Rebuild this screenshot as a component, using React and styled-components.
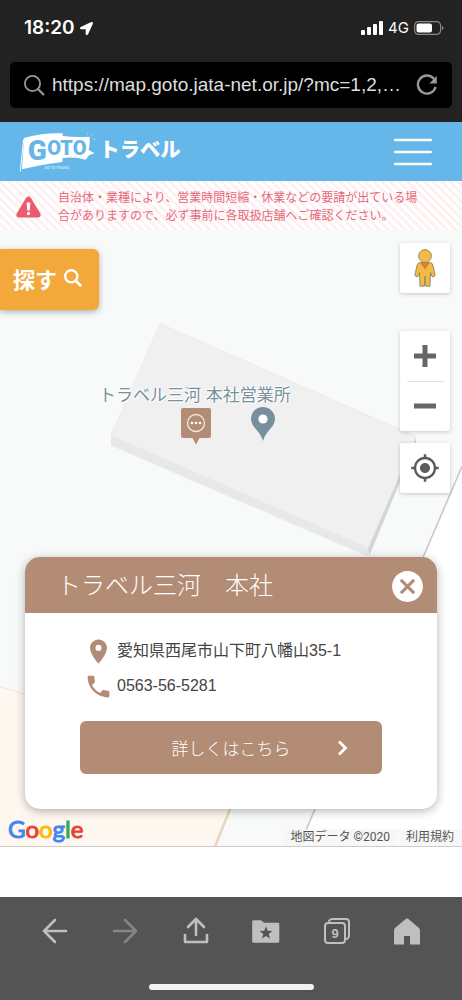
import React from "react";
import styled, { createGlobalStyle } from "styled-components";
import { MdCancel, MdMyLocation, MdPhone, MdPlace } from "react-icons/md";
import { FaLocationArrow } from "react-icons/fa";

const brown = "#b38c75";

const GlobalStyle = createGlobalStyle`
  * {
    box-sizing: border-box;
  }
  body {
    margin: 0;
    background: #fff;
    color: #444;
    font-family: "Liberation Sans", "Noto Sans CJK JP", sans-serif;
  }
  svg {
    display: block;
    flex: none;
  }
  button {
    font-family: inherit;
  }
`;

const Page = styled.div`
  display: flex;
  flex-direction: column;
  min-height: 100vh;
`;

const BrowserTop = styled.div`
  display: flex;
  flex-direction: column;
  gap: 12px;
  padding: 6px 10px 14px;
  background: #222;
`;

const StatusBar = styled.div`
  display: flex;
  align-items: center;
  justify-content: space-between;
  height: 44px;
  padding: 0 8px 0 14px;
  color: #fff;
`;

const StatusGroup = styled.div`
  display: flex;
  align-items: center;
  gap: 5px;
`;

const Time = styled.span`
  font: 600 19px/24px Inter, sans-serif;
`;

const Network = styled.span`
  font: 400 15px/24px Inter, sans-serif;
`;

const AddressBar = styled.form`
  display: flex;
  align-items: center;
  gap: 7px;
  height: 46px;
  padding: 0 13px 0 14px;
  border-radius: 5px;
  background: #000;
  color: #999;
`;

const AddressInput = styled.input`
  flex: 1;
  min-width: 0;
  padding: 0;
  border: 0;
  outline: 0;
  background: transparent;
  color: #ddd;
  font-family: inherit;
  font-size: 19px;
  text-overflow: ellipsis;
`;

const IconButton = styled.button`
  display: flex;
  align-items: center;
  justify-content: center;
  width: ${(props) => props.$size}px;
  height: ${(props) => props.$size}px;
  padding: 0;
  border: 0;
  background: transparent;
  color: inherit;
  cursor: pointer;
`;

const SiteHeader = styled.header`
  display: flex;
  align-items: center;
  justify-content: space-between;
  height: 59px;
  padding: 0 30px 0 20px;
  background: #65b6e9;
  color: #fff;
`;

const LogoLink = styled.a`
  color: #fff;
`;

const Notice = styled.div`
  display: flex;
  align-items: center;
  gap: 17px;
  padding: 8px 35px 5px 16px;
  background: repeating-linear-gradient(
    45deg,
    #fff 0,
    #fff 3px,
    #fdf1f2 3px,
    #fdf1f2 6px
  );
`;

const NoticeText = styled.p`
  margin: 0;
  color: #e6697a;
  font-size: 12px;
  line-height: 18px;
`;

const MapArea = styled.main`
  position: relative;
  flex: 1;
  min-height: 600px;
  margin-bottom: 50px;
  border-bottom: 1px solid #ccc;
  background: #f8faf9;
  overflow: hidden;
`;

const MapDrawing = styled.svg`
  position: absolute;
  inset: 0;
  width: 100%;
  height: 100%;
`;

const MapLabel = styled.span`
  position: absolute;
  top: 153px;
  left: 99px;
  color: #78909c;
  font-size: 17px;
  line-height: 26px;
  text-shadow: 0 0 2px #fff, 0 0 2px #fff, 1px 1px 1px #fff, -1px -1px 1px #fff;
  white-space: nowrap;
`;

const Pin = styled.div`
  position: absolute;
  top: ${(props) => props.$top}px;
  left: ${(props) => props.$left}px;
`;

const SearchButton = styled.button`
  position: absolute;
  top: 19px;
  left: 0;
  display: flex;
  align-items: center;
  gap: 7px;
  height: 61px;
  padding: 0 17px 3px 13px;
  border: 0;
  border-radius: 0 6px 6px 0;
  background: #f2a83b;
  box-shadow: 0 2px 6px rgba(0, 0, 0, 0.3);
  color: #fff;
  font-size: 22px;
  font-weight: 700;
`;

const Controls = styled.div`
  position: absolute;
  top: 13px;
  right: 12px;
  display: flex;
  flex-direction: column;
  gap: 12px;
`;

const ControlPanel = styled.div`
  display: flex;
  flex-direction: column;
  align-items: center;
  margin-bottom: ${(props) => (props.$spaced ? 26 : 0)}px;
  border-radius: 2px;
  background: #fff;
  box-shadow: 0 1px 4px rgba(0, 0, 0, 0.2);
  color: #5c5c5c;
`;

const Divider = styled.div`
  width: 37px;
  height: 1px;
  margin-bottom: -1px;
  background: #e0e0e0;
`;

const Card = styled.section`
  position: absolute;
  right: 25px;
  bottom: 37px;
  left: 25px;
  border-radius: 15px;
  background: #fff;
  box-shadow: 0 2px 10px rgba(0, 0, 0, 0.3);
  overflow: hidden;
`;

const CardHeader = styled.div`
  display: flex;
  align-items: center;
  justify-content: space-between;
  height: 56px;
  padding: 2px 11px 0 32px;
  background: ${brown};
  color: #fff;
`;

const CardTitle = styled.h2`
  margin: 0;
  font-size: 24px;
  font-weight: 300;
  line-height: 36px;
`;

const CardBody = styled.div`
  display: flex;
  flex-direction: column;
  gap: 20px;
  padding: 23px 55px 35px;
`;

const Details = styled.ul`
  display: flex;
  flex-direction: column;
  gap: 5px;
  margin: 0;
  padding: 0 0 0 4px;
  list-style: none;
`;

const Detail = styled.li`
  display: flex;
  align-items: center;
  gap: 4px;
  color: ${brown};
  font-size: 16px;
  line-height: 30px;
`;

const DetailText = styled.span`
  color: #444;
`;

const DetailLink = styled.a`
  color: #444;
  text-decoration: none;
`;

const MoreLink = styled.a`
  display: grid;
  grid-template-columns: 1fr auto 1fr;
  align-items: center;
  height: 53px;
  padding: 0 34px;
  border-radius: 6px;
  background: ${brown};
  color: #fff;
  font-size: 17px;
  font-weight: 300;
  text-decoration: none;

  span {
    grid-column: 2;
  }
  svg {
    justify-self: end;
  }
`;

const GoogleLogo = styled.a`
  position: absolute;
  bottom: 1px;
  left: 8px;
  font: 400 24px/32px Lato, sans-serif;
  text-decoration: none;
  -webkit-text-stroke-width: 1px;
`;

const Letter = styled.span`
  color: ${(props) => props.$color};
`;

const Attribution = styled.div`
  position: absolute;
  right: 0;
  bottom: 0;
  display: flex;
  gap: 1px;
  color: #555;
  font: 400 12px/17px Roboto, "Noto Sans CJK JP", sans-serif;

  span,
  a {
    padding: 0 8px 0 7px;
    background: rgba(245, 245, 245, 0.8);
    color: inherit;
    text-decoration: none;
  }
`;

const BrowserBottom = styled.footer`
  display: flex;
  flex-direction: column;
  align-items: center;
  justify-content: space-between;
  height: 103px;
  padding: 19px 40px 10px;
  background: #545454;
  color: #bfbfbf;
`;

const Toolbar = styled.nav`
  display: flex;
  align-self: stretch;
  justify-content: space-between;
`;

const HomeIndicator = styled.div`
  width: 165px;
  height: 6px;
  border-radius: 3px;
  background: #f2f2f2;
`;

const googleLetters = [
  ["G", "#4285f4"],
  ["o", "#ea4335"],
  ["o", "#fbbc05"],
  ["g", "#4285f4"],
  ["l", "#34a853"],
  ["e", "#ea4335"],
];

const SignalIcon = () => (
  <svg width="22" height="14" viewBox="0 0 22 14" fill="currentColor">
    <rect x="0" y="9" width="4" height="5" rx="1" />
    <rect x="6" y="6" width="4" height="8" rx="1" />
    <rect x="12" y="3" width="4" height="11" rx="1" />
    <rect x="18" y="0" width="4" height="14" rx="1" />
  </svg>
);

const BatteryIcon = () => (
  <svg width="30" height="14" viewBox="0 0 30 14" fill="none">
    <rect x=".6" y=".6" width="26" height="12.8" rx="4" stroke="#888" strokeWidth="1.2" />
    <rect x="2.5" y="2.5" width="15.5" height="9" rx="2" fill="#fff" />
    <path d="M28 5c2 .6 2 3.4 0 4z" fill="#888" />
  </svg>
);

const LensIcon = ({ size = 21, weight = 1.8 }) => (
  <svg width={size} height={size} viewBox="0 0 21 21" fill="none" stroke="currentColor" strokeWidth={weight}>
    <circle cx="8.5" cy="8.5" r={8.5 - weight / 2} />
    <path d="M13.500 13.500l6.500 6.500" strokeWidth={weight + 0.4} />
  </svg>
);

const ReloadIcon = () => (
  <svg width="22" height="22" viewBox="0 0 22 22" fill="none">
    <path d="M18 5A9 9 0 1 0 19.600 13" stroke="currentColor" strokeWidth="2.4" />
    <path d="M20.8 2v7.500h-7.500z" fill="currentColor" />
  </svg>
);

const SiteLogo = () => (
  <svg width="170" height="42" viewBox="60 50 510 126" role="img" aria-label="GOTOトラベル">
    <path
      d="M72 71Q128 54 188 57L188 65Q228 70 269 67Q271 86 266 107L284 117L267 123L257 136Q224 126 188 131L187 143Q119 152 66 165Z"
      fill="#fff"
    />
    <path d="M71 75Q66 120 61 171" stroke="#fff" strokeWidth="3" fill="none" />
    <path d="M262 61l2-9M272 66l10-8M276 74l13 1" stroke="#a9d8f5" strokeWidth="2" />
    <g fill="#65b6e9" fontFamily="Roboto, sans-serif" fontWeight="900">
      <text x="83" y="137" fontSize="84">
        G
      </text>
      <text x="142" y="121" fontSize="60">
        OTO
      </text>
    </g>
    <text x="134" y="164" fill="#c4e4f8" fontFamily="Roboto, sans-serif" fontSize="11" fontWeight="700">
      GO TO TRAVEL
    </text>
    <text
      x="298"
      y="129"
      fill="#fff"
      fontFamily="Noto Sans CJK JP, sans-serif"
      fontSize="61"
      fontWeight="900"
      fontStyle="oblique 10deg"
    >
      トラベル
    </text>
  </svg>
);

const MenuIcon = () => (
  <svg width="38" height="28" viewBox="0 0 38 28" stroke="#fff" strokeWidth="2.6" strokeLinecap="round">
    <path d="M1.3 2h35.4M1.3 14h35.4M1.3 26h35.4" />
  </svg>
);

const WarningIcon = () => (
  <svg width="25" height="22" viewBox="0 0 25 22">
    <path
      d="M10 2Q12.500-1.500 15 2L24.300 17.500Q25.500 21.300 22 21.500H3Q-.5 21.300.7 17.500Z"
      fill="#ec5b6d"
    />
    <path d="M10.600 6.500h3.800l-.7 8h-2.400z" fill="#fff" />
    <circle cx="12.5" cy="17.500" r="1.700" fill="#fff" />
  </svg>
);

const PegmanIcon = () => (
  <svg width="22" height="38" viewBox="0 0 22 38">
    <path
      d="M6.200 13.500Q3.500 13.700 3 16.500L.8 26.500Q1.200 28 4 27.500L5.500 23.500L6 37.200H10.300L11 27L11.700 37.200H16L16.500 23.500L18 27.500Q20.800 28 21.200 26.500L19 16.500Q18.500 13.700 15.800 13.500Z"
      fill="#f3bb45"
      stroke="#8b8265"
      strokeWidth=".9"
    />
    <path d="M6 13.500h10l-5 7z" fill="#d6823d" />
    <circle cx="11" cy="7" r="6.400" fill="#f3bb45" stroke="#8b8265" strokeWidth=".9" />
  </svg>
);

const ZoomIcon = ({ plus }) => (
  <svg width="22" height="22" viewBox="0 0 22 22" stroke="#666" strokeWidth="5">
    <path d="M0 11H22" />
    {plus && <path d="M11 0V22" />}
  </svg>
);

const ShopMarker = () => (
  <svg width="30" height="37" viewBox="0 0 30 37">
    <path d="M2 0h26q2 0 2 2v26q0 2-2 2h-9.500L15 36.500 11.500 30H2q-2 0-2-2V2q0-2 2-2z" fill={brown} />
    <circle cx="15" cy="15" r="8.500" fill="none" stroke="#f1e6df" strokeWidth="1.300" />
    <g fill="#fff">
      <circle cx="11" cy="15" r="1.300" />
      <circle cx="15" cy="15" r="1.300" />
      <circle cx="19" cy="15" r="1.300" />
    </g>
  </svg>
);

const PlaceMarker = () => (
  <svg width="24" height="34" viewBox="0 0 24 34">
    <path
      d="M12 0C5.400 0 0 5.200 0 11.700C0 20.500 9 23 12 34C15 23 24 20.500 24 11.700C24 5.200 18.600 0 12 0z"
      fill="#78909c"
    />
    <circle cx="12" cy="12" r="4.600" fill="#fff" />
  </svg>
);

const ChevronIcon = () => (
  <svg width="11" height="16" viewBox="0 0 11 16" fill="none" stroke="#fff" strokeWidth="2.800">
    <path d="M2 1.500L8.500 8L2 14.500" />
  </svg>
);

const ToolIcon = ({ children, color = "currentColor" }) => (
  <svg
    width="30"
    height="30"
    viewBox="0 0 30 30"
    fill="none"
    stroke={color}
    strokeWidth="2.600"
    strokeLinecap="round"
    strokeLinejoin="round"
  >
    {children}
  </svg>
);

const tools = [
  {
    label: "戻る",
    icon: (
      <ToolIcon>
        <path d="M26 15H4M15 4L4 15L15 26" />
      </ToolIcon>
    ),
  },
  {
    label: "進む",
    icon: (
      <ToolIcon color="#868686">
        <path d="M4 15H26M15 4L26 15L15 26" />
      </ToolIcon>
    ),
  },
  {
    label: "共有",
    icon: (
      <ToolIcon>
        <path d="M15 19V3M7 11L15 3L23 11M4 19V26H26V19" />
      </ToolIcon>
    ),
  },
  {
    label: "ブックマーク",
    icon: (
      <ToolIcon>
        <path d="M2.500 5.500H9.500L12.500 8H27V25.500H2.500Z" fill="currentColor" />
        <path
          d="M15 10.200l1.700 4.500 4.700.2-3.700 3 1.300 4.600L15 19.900l-4 2.600 1.300-4.600-3.700-3 4.700-.2z"
          fill="#545454"
          stroke="none"
        />
      </ToolIcon>
    ),
  },
  {
    label: "タブ",
    icon: (
      <ToolIcon>
        <rect x="3" y="7" width="20" height="20" rx="3" strokeWidth="2" />
        <path d="M7 5Q8 3 10 3H24Q27 3 27 6V20Q27 22 25 23" strokeWidth="2" />
        <text
          x="13"
          y="21.500"
          fill="currentColor"
          stroke="none"
          textAnchor="middle"
          fontFamily="Liberation Sans, sans-serif"
          fontSize="13"
          fontWeight="700"
        >
          9
        </text>
      </ToolIcon>
    ),
  },
  {
    label: "ホーム",
    icon: (
      <ToolIcon>
        <path
          d="M15 2.500Q16 2.500 17 3.500L27 12Q28 13 28 14.500V28.500H18V20H12V28.500H2V14.500Q2 13 3 12L13 3.500Q14 2.500 15 2.500Z"
          fill="currentColor"
          stroke="none"
        />
      </ToolIcon>
    ),
  },
];

const App = () => {
  return (
    <Page>
      <GlobalStyle />
      <BrowserTop>
        <StatusBar>
          <StatusGroup>
            <Time>18:20</Time>
            <FaLocationArrow size={13} />
          </StatusGroup>
          <StatusGroup>
            <SignalIcon />
            <Network>4G</Network>
            <BatteryIcon />
          </StatusGroup>
        </StatusBar>
        <AddressBar onSubmit={(e) => e.preventDefault()}>
          <LensIcon />
          <AddressInput
            type="text"
            aria-label="URL"
            defaultValue="https://map.goto.jata-net.or.jp/?mc=1,2,…"
          />
          <IconButton type="button" $size={24} aria-label="再読み込み">
            <ReloadIcon />
          </IconButton>
        </AddressBar>
      </BrowserTop>

      <SiteHeader>
        <LogoLink href="#">
          <SiteLogo />
        </LogoLink>
        <IconButton type="button" $size={38} aria-label="メニュー">
          <MenuIcon />
        </IconButton>
      </SiteHeader>

      <Notice>
        <WarningIcon />
        <NoticeText>
          自治体・業種により、営業時間短縮・休業などの要請が出ている場合がありますので、必ず事前に各取扱店舗へご確認ください。
        </NoticeText>
      </Notice>

      <MapArea>
        <MapDrawing viewBox="0 0 462 617" preserveAspectRatio="xMidYMid slice">
          <path d="M462 237L299 617H462Z" fill="#fff" />
          <path d="M462 237L299 617" stroke="#c4c6ca" strokeWidth="1.500" />
          <path d="M0 457L270 544L215 617H0Z" fill="#fdf7f0" />
          <path d="M0 457L80 482" stroke="#f3e6d6" />
          <path d="M244 545L215 617H270V545Z" fill="#f8faf9" />
          <path d="M244 545L215 617" stroke="#e8d5c0" strokeWidth="2.500" />
          <path d="M111 206L368 318V327L111 216Z" fill="#e7e8ea" />
          <path d="M416 207V214L369 327L368 318Z" fill="#d2d5d9" />
          <path d="M160 94L416 207L368 318L111 206Z" fill="#f0f0f0" stroke="#ececec" />
        </MapDrawing>
        <MapLabel>トラベル三河 本社営業所</MapLabel>
        <Pin $top={178} $left={181}>
          <ShopMarker />
        </Pin>
        <Pin $top={177} $left={251}>
          <PlaceMarker />
        </Pin>

        <SearchButton type="button">
          探す
          <LensIcon size={18} weight={2.8} />
        </SearchButton>

        <Controls>
          <ControlPanel $spaced>
            <IconButton type="button" $size={50} aria-label="ストリートビュー">
              <PegmanIcon />
            </IconButton>
          </ControlPanel>
          <ControlPanel>
            <IconButton type="button" $size={50} aria-label="拡大">
              <ZoomIcon plus />
            </IconButton>
            <Divider />
            <IconButton type="button" $size={50} aria-label="縮小">
              <ZoomIcon />
            </IconButton>
          </ControlPanel>
          <ControlPanel>
            <IconButton type="button" $size={50} aria-label="現在地">
              <MdMyLocation size={30} />
            </IconButton>
          </ControlPanel>
        </Controls>

        <GoogleLogo href="#" aria-label="Google">
          {googleLetters.map(([letter, color], index) => (
            <Letter key={index} $color={color}>
              {letter}
            </Letter>
          ))}
        </GoogleLogo>
        <Attribution>
          <span>地図データ ©2020</span>
          <a href="#">利用規約</a>
        </Attribution>

        <Card>
          <CardHeader>
            <CardTitle>トラベル三河　本社</CardTitle>
            <IconButton type="button" $size={37} aria-label="閉じる">
              <MdCancel size={37} />
            </IconButton>
          </CardHeader>
          <CardBody>
            <Details>
              <Detail>
                <MdPlace size={29} />
                <DetailText>愛知県西尾市山下町八幡山35-1</DetailText>
              </Detail>
              <Detail>
                <MdPhone size={29} />
                <DetailLink href="tel:0563565281">0563-56-5281</DetailLink>
              </Detail>
            </Details>
            <MoreLink href="#">
              <span>詳しくはこちら</span>
              <ChevronIcon />
            </MoreLink>
          </CardBody>
        </Card>
      </MapArea>

      <BrowserBottom>
        <Toolbar>
          {tools.map((tool) => (
            <IconButton key={tool.label} type="button" $size={30} aria-label={tool.label}>
              {tool.icon}
            </IconButton>
          ))}
        </Toolbar>
        <HomeIndicator />
      </BrowserBottom>
    </Page>
  );
};

export default App;
